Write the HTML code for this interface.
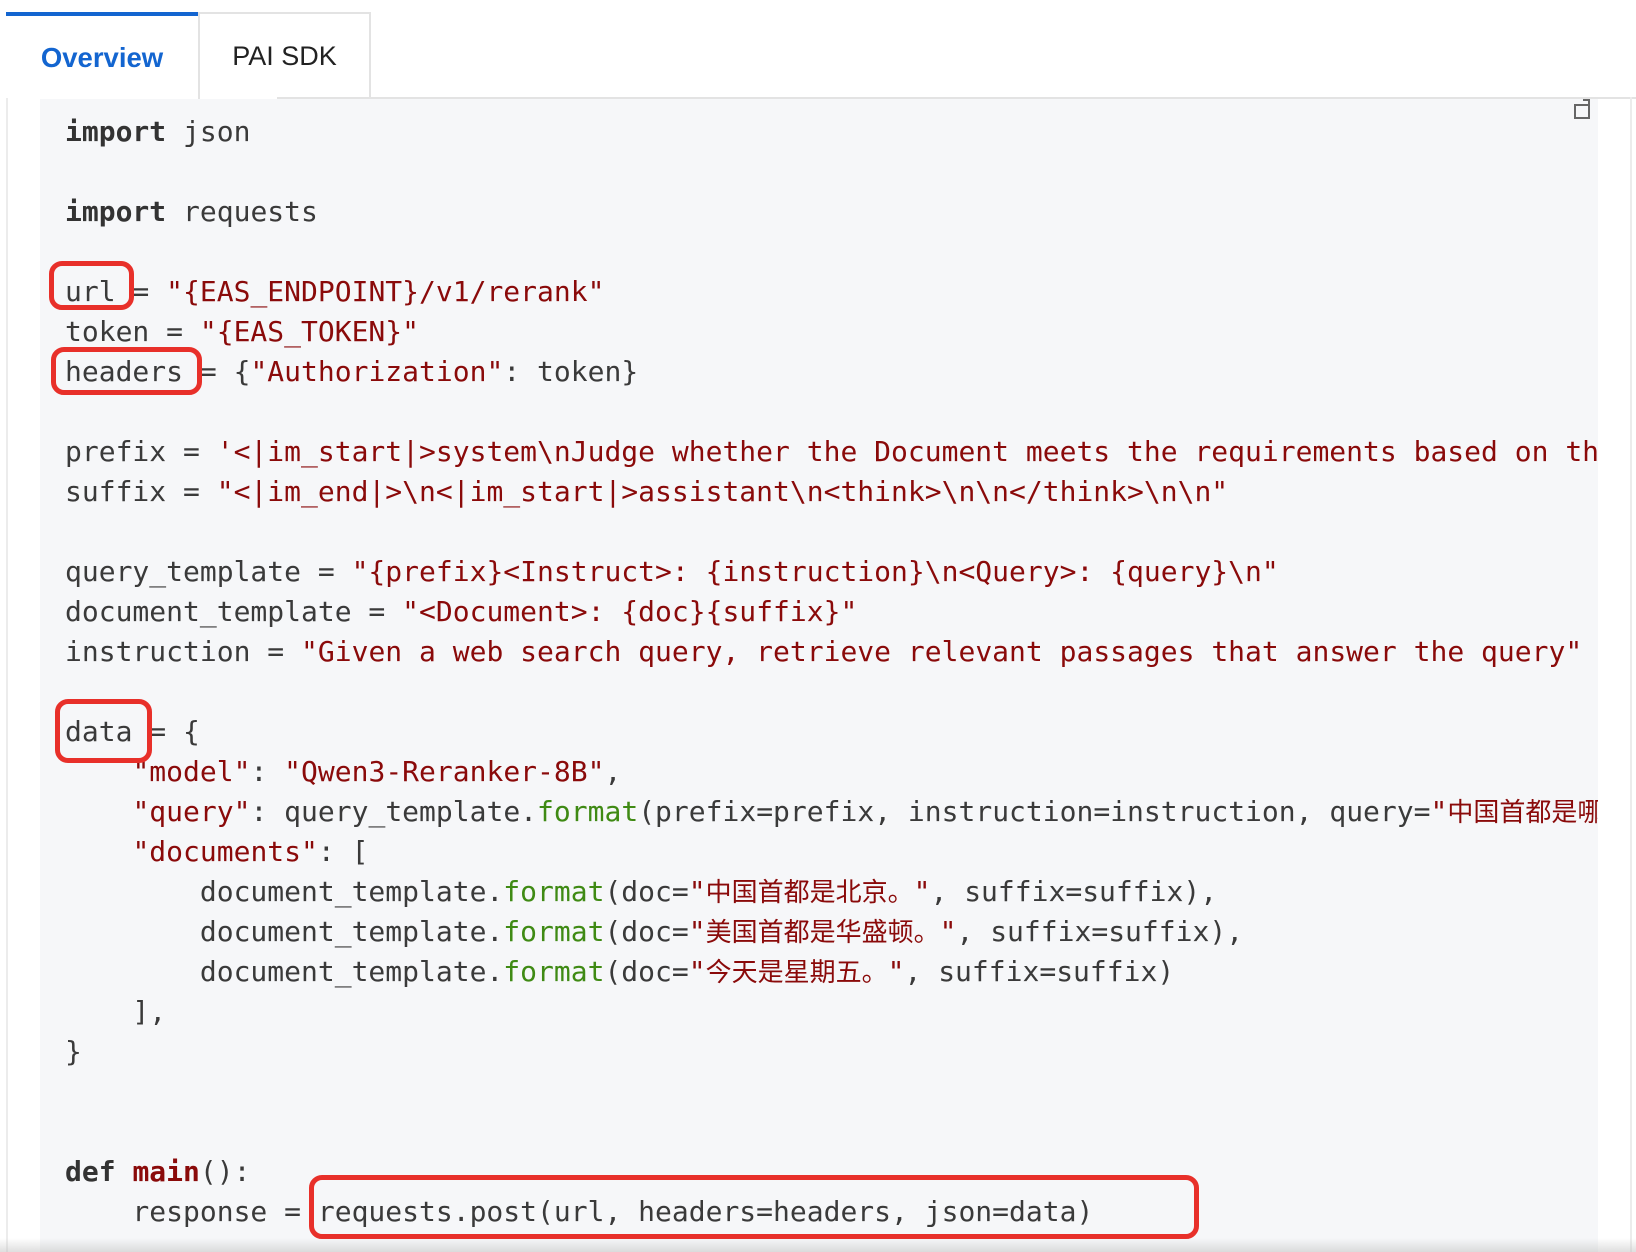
<!DOCTYPE html>
<html><head><meta charset="utf-8"><style>
html,body{margin:0;padding:0;background:#fff;width:1636px;height:1252px;overflow:hidden;position:relative;font-family:"Liberation Sans",sans-serif}
.tabline{position:absolute;left:277px;right:0;top:97px;height:2px;background:#e3e3e3}
.tab1{position:absolute;left:6px;top:12px;width:192px;height:86px;background:#fff;border-top:4px solid #1365d0;box-sizing:border-box;color:#1365d0;font-size:27.5px;font-weight:bold;text-align:center;line-height:84px}
.tab2{position:absolute;left:198px;top:12px;width:173px;height:87px;border:2px solid #e3e3e3;border-bottom:none;box-sizing:border-box;color:#222;font-size:27px;text-align:center;line-height:84px}
.lb{position:absolute;left:6px;top:97px;width:2px;bottom:0;background:#ececec}
.rb{position:absolute;left:1630px;top:97px;width:2px;bottom:0;background:#ececec}
.code{position:absolute;left:40px;top:99px;width:1558px;height:1153px;background:#f6f7f9;overflow:hidden}
pre{margin:0;position:absolute;left:25px;top:13px;font-family:"DejaVu Sans Mono","Liberation Mono",monospace;font-size:28px;line-height:40px;color:#3a3a3a;white-space:pre}
.k{font-weight:bold;color:#333}.s{color:#8a0a0a}.f{color:#3f8a14}.m{color:#8a0a0a;font-weight:bold}
.c{font-family:"Noto Sans CJK SC",sans-serif;font-size:26px;line-height:1}
.box{position:absolute;border:5px solid #e8302a;border-radius:13px;box-sizing:border-box}
.copy{position:absolute;left:1574px;top:104px;width:12px;height:11px;border:2px solid #666}
.copy2{position:absolute;left:1583px;top:99px;width:5px;height:7px;border-top:2px solid #666;border-right:2px solid #666}
.fade{position:absolute;left:0;right:0;bottom:0;height:14px;background:linear-gradient(rgba(200,200,200,0),rgba(190,190,190,.5))}
</style></head><body>
<div class="tabline"></div>
<div class="lb"></div><div class="rb"></div>
<div class="tab1">Overview</div>
<div class="tab2">PAI SDK</div>
<div class="code"><pre><span class="k">import</span> json

<span class="k">import</span> requests

url = <span class="s">"{EAS_ENDPOINT}/v1/rerank"</span>
token = <span class="s">"{EAS_TOKEN}"</span>
headers = {<span class="s">"Authorization"</span>: token}

prefix = <span class="s">'&lt;|im_start|&gt;system\nJudge whether the Document meets the requirements based on the Query and the Instruct provided. Note that the answer can only be "yes" or "no".&lt;|im_end|&gt;\n&lt;|im_start|&gt;user\n'</span>
suffix = <span class="s">"&lt;|im_end|&gt;\n&lt;|im_start|&gt;assistant\n&lt;think&gt;\n\n&lt;/think&gt;\n\n"</span>

query_template = <span class="s">"{prefix}&lt;Instruct&gt;: {instruction}\n&lt;Query&gt;: {query}\n"</span>
document_template = <span class="s">"&lt;Document&gt;: {doc}{suffix}"</span>
instruction = <span class="s">"Given a web search query, retrieve relevant passages that answer the query"</span>

data = {
    <span class="s">"model"</span>: <span class="s">"Qwen3-Reranker-8B"</span>,
    <span class="s">"query"</span>: query_template.<span class="f">format</span>(prefix=prefix, instruction=instruction, query=<span class="s">"<span class="c">中国首都是哪里？</span>"</span>),
    <span class="s">"documents"</span>: [
        document_template.<span class="f">format</span>(doc=<span class="s">"<span class="c">中国首都是北京。</span>"</span>, suffix=suffix),
        document_template.<span class="f">format</span>(doc=<span class="s">"<span class="c">美国首都是华盛顿。</span>"</span>, suffix=suffix),
        document_template.<span class="f">format</span>(doc=<span class="s">"<span class="c">今天是星期五。</span>"</span>, suffix=suffix)
    ],
}


<span class="k">def</span> <span class="m">main</span>():
    response = requests.post(url, headers=headers, json=data)
</pre></div>
<div class="copy"></div><div class="copy2"></div>
<div class="box" style="left:49px;top:261px;width:85px;height:49px"></div>
<div class="box" style="left:51px;top:347px;width:151px;height:48px"></div>
<div class="box" style="left:55px;top:699px;width:97px;height:64px"></div>
<div class="box" style="left:309px;top:1175px;width:890px;height:64px"></div>
<div class="fade"></div>
</body></html>
